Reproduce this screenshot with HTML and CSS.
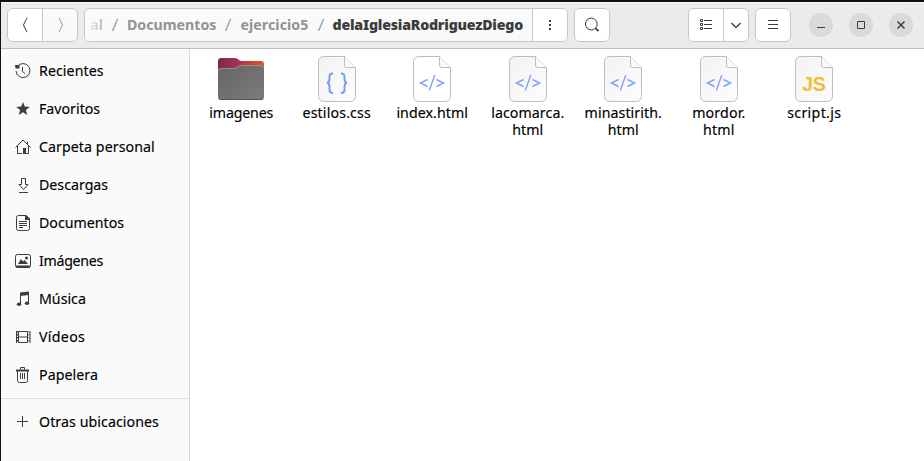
FILE: index.html
```html
<!DOCTYPE html>
<html lang="es">
<head>
<meta charset="utf-8">
<title>delaIglesiaRodriguezDiego</title>
<link rel="stylesheet" href="styles.css">
</head>
<body>
<svg width="0" height="0" class="defs" aria-hidden="true">
  <defs>
    <linearGradient id="paper" x1="0" y1="0" x2="1" y2="1"><stop offset="0" stop-color="#f3f3f3"/><stop offset="1" stop-color="#fcfcfc"/></linearGradient>
    <linearGradient id="back" x1="0" y1="0" x2="1" y2="0"><stop offset="0" stop-color="#7b2854"/><stop offset=".4" stop-color="#a3314f"/><stop offset="1" stop-color="#e95420"/></linearGradient>
    <linearGradient id="front" x1="0" y1="0" x2="1" y2="1"><stop offset="0" stop-color="#666"/><stop offset="1" stop-color="#7b7b7b"/></linearGradient>
    <symbol id="sheet" viewBox="0 0 38 46"><path d="M5.500.5H26.500L37.500 11.500V40.500a5 5 0 0 1-5 5H5.500a5 5 0 0 1-5-5V5.500a5 5 0 0 1 5-5Z" stroke="#bdbdbd"/><path d="M26.500.5V9.500q0 2 2 2h9" fill="#fafafa" stroke="#bdbdbd"/></symbol>
    <symbol id="tags" viewBox="0 0 38 46"><path d="M14.500 23.500 7.500 27l7 3.500M23.500 23.500l7 3.500-7 3.500M21.800 19 16.300 34.500" fill="none" stroke="#7fa3f3" stroke-width="1.400"/></symbol>
  </defs>
</svg>
<div class="window">
  <header class="bar">
    <div class="group nav">
      <button><svg width="16" height="16"><path d="M10 .8 6.500 8l3.500 7.200"/></svg></button>
      <button class="off"><svg width="16" height="16"><path d="m7 .8 3.500 7.200L7 15.200"/></svg></button>
    </div>
    <div class="group path">
      <div class="crumbs"><span class="cut">al</span><i>/</i><span>Documentos</span><i>/</i><span class="wide">ejercicio5</span><i>/</i><b>delaIglesiaRodriguezDiego</b></div>
      <button><svg width="16" height="16"><path class="solid" d="M7 3h2v2H7zM7 7h2v2H7zM7 11h2v2H7z"/></svg></button>
    </div>
    <div class="group search"><button><svg width="16" height="16"><circle cx="7.300" cy="7" r="5.900"/><path d="m11.500 11.200 3 3" stroke-width="1.800"/></svg></button></div>
    <div class="group view">
      <button><svg width="16" height="16"><path d="M2.500 2.500h2v2h-2zM2.500 6.500h2v2h-2zM2.500 10.500h2v2h-2zM6 3.500h8M6 7.500h8M6 11.500h8"/></svg></button>
      <button><svg width="16" height="16"><path d="m3.500 6 4.500 4.500L12.500 6" stroke-width="1.300"/></svg></button>
    </div>
    <div class="group menu"><button><svg width="16" height="16"><path d="M3 3.500h10M3 7.500h10M3 11.500h10"/></svg></button></div>
    <div class="controls">
      <button><svg width="16" height="16"><path d="M4 10.500h8"/></svg></button>
      <button><svg width="16" height="16"><path d="M4.500 4.500h7v7h-7z"/></svg></button>
      <button><svg width="16" height="16"><path d="m4.500 4.500 7 7m0-7-7 7" stroke-width="1.500"/></svg></button>
    </div>
  </header>
  <div class="body">
    <nav class="side">
      <a><svg width="16" height="16"><path d="M2.300 3.500A7 7 0 1 1 1 8M7.500 4v4.500l2.500 2"/><path class="solid" d="M0 2h4.500v3.500H.5z"/></svg><span class="wide">Recientes</span></a>
      <a><svg width="16" height="16"><path class="solid" d="m8 1 1.800 4.600 5 .3-3.900 3.200 1.300 4.900L8 11.300 3.800 14l1.300-4.900-3.900-3.200 5-.3z"/></svg><span>Favoritos</span></a>
      <a><svg width="16" height="16"><path d="M.5 8.500 8 1l7.500 7.500M2.500 7v7.500H7M13.500 7v7.500H10M12.500 2.500v3"/><path class="solid" d="M8 9h3v6H8z"/></svg><span class="wide">Carpeta personal</span></a>
      <a><svg width="16" height="16"><path d="M6.500 1.500h4v6H13l-4.500 5L4 7.500h2.500zM4 15.500h9"/></svg><span>Descargas</span></a>
      <a><svg width="16" height="16"><path d="M3.500.5H11L14.500 4v9.500a2 2 0 0 1-2 2h-9a2 2 0 0 1-2-2v-11a2 2 0 0 1 2-2ZM4 6.500h8M4 8.500h8M4 10.500h8M4 12.500h4"/><path class="solid" d="M10 0h1l4 4v1h-5z"/></svg><span>Documentos</span></a>
      <a><svg width="16" height="16"><rect x=".5" y="1.500" width="15" height="13" rx="2"/><path class="solid" d="M1 12.500h14v2H1zM3 11l3-5 2 2.500 1.500-1.500L13 11z"/><circle class="solid" cx="11.500" cy="5" r="1.500"/></svg><span class="tight">Imágenes</span></a>
      <a><svg width="16" height="16"><path d="M5.500 13V2.500l8-1V12"/><path class="solid" d="M5 1.500 14 .5V4L5 5z"/><ellipse class="solid" cx="4" cy="13.200" rx="2.200" ry="1.800"/><ellipse class="solid" cx="12" cy="12.200" rx="2.200" ry="1.800"/></svg><span>Música</span></a>
      <a><svg width="16" height="16"><path d="M3.500 2.500h9v11h-9zM3 8h10M1.500 2v12M15 2v12"/><path d="M2.500 2v12M14 2v12" stroke-dasharray="1.500 1.500"/></svg><span class="widest">Vídeos</span></a>
      <a><svg width="16" height="16"><path d="M5.500 2.500v-2h4v2M2.500 4v9.500a2 2 0 0 0 2 2h6a2 2 0 0 0 2-2V4M5.500 6v6M7.500 6v6M9.500 6v6"/><path d="M1 3.500h13" stroke-width="2"/></svg><span class="wide">Papelera</span></a>
      <hr>
      <a><svg width="16" height="16"><path d="M2 7.500h11M7.500 2v11"/></svg><span class="wide">Otras ubicaciones</span></a>
    </nav>
    <main class="files">
      <figure><svg width="46" height="46"><path d="M0 8V5a3 3 0 0 1 3-3h14q2 0 3.500 1.500T24 5h19a3 3 0 0 1 3 3v10H0z" fill="url(#back)"/><path d="M0 15a3 3 0 0 1 3-3h13q2 0 3.500-1.500T23 9h20a3 3 0 0 1 3 3v29a3 3 0 0 1-3 3H3a3 3 0 0 1-3-3z" fill="url(#front)"/><path d="M.5 15a2.500 2.500 0 0 1 2.500-2.500h13q2 0 3.500-1.500T23 9.500h20a2.500 2.500 0 0 1 2.500 2.500" fill="none" stroke="#929292"/><path d="M1 42.500q.7 1 2 1h40q1.300 0 2-1" fill="none" stroke="#555"/></svg><figcaption class="snug">imagenes</figcaption></figure>
      <figure><svg width="38" height="46"><use href="#sheet" fill="url(#paper)"/><path d="M15 17.500c-3 0-3.500 1-3.500 3v2.500q0 3.500-2.500 3.700 2.500.3 2.500 3.800V34q0 3 3.500 3M23 17.500c3 0 3.500 1 3.500 3v2.500q0 3.500 2.500 3.700-2.500.3-2.500 3.800V34q0 3-3.500 3" fill="none" stroke="#729cf5" stroke-width="1.900"/></svg><figcaption class="wider">estilos.css</figcaption></figure>
      <figure><svg width="38" height="46"><use href="#sheet" fill="#fff"/><use href="#tags"/></svg><figcaption class="wide">index.html</figcaption></figure>
      <figure><svg width="38" height="46"><use href="#sheet" fill="url(#paper)"/><use href="#tags"/></svg><figcaption class="wide">lacomarca.<br>html</figcaption></figure>
      <figure><svg width="38" height="46"><use href="#sheet" fill="url(#paper)"/><use href="#tags"/></svg><figcaption class="wide">minastirith.<br>html</figcaption></figure>
      <figure><svg width="38" height="46"><use href="#sheet" fill="url(#paper)"/><use href="#tags"/></svg><figcaption class="wider">mordor.<br>html</figcaption></figure>
      <figure><svg width="38" height="46"><use href="#sheet" fill="url(#paper)"/><text x="18.500" y="35" class="js">JS</text></svg><figcaption class="widest">script.js</figcaption></figure>
    </main>
  </div>
</div>
</body>
</html>
```
FILE: styles.css
```css
* { box-sizing: border-box; }
body { margin: 0; background: #fff; font: 14.2px/17px "Noto Sans", "Open Sans", sans-serif; color: #000; }
.defs { display: block; width: 0; height: 0; position: absolute; }
.window { width: 924px; height: 461px; overflow: hidden; display: flex; flex-direction: column; border-top: 2px solid #111; border-left: 1px solid #1c0c14; }
.bar { height: 47px; flex: none; display: flex; padding: 5px 0 0 6px; background: #ebebeb; border-top: 1px solid #f9f9f9; border-bottom: 1px solid #bfbfbf; }
.bar svg, .side svg { fill: none; stroke: #3d3d3d; stroke-width: 1; display: block; flex: none; overflow: visible; }
.bar .solid, .side .solid { fill: #3d3d3d; stroke: none; }
button { border: 0; padding: 0; background: #fff; display: flex; align-items: center; justify-content: center; }
.group { height: 34px; display: flex; border: 1px solid #c6c6c6; border-radius: 6px; overflow: hidden; background: #fff; }
.group button { flex: 1; }
.group button + button, .path button { border-left: 1px solid #c6c6c6; }
.nav { width: 71px; margin-right: 6px; }
.group .off { background: #fafafa; }
.bar .off svg { stroke: #999; }
.path { width: 484px; margin-right: 6px; }
.path button { flex: 0 0 35px; }
.crumbs { flex: 1; display: flex; align-items: center; justify-content: flex-end; padding: 0 9px 2px 0; background: #fafafa; font-weight: 700; color: #929292; white-space: nowrap; }
.crumbs i { font-weight: 400; font-style: normal; width: 24px; text-align: center; transform: skewX(-6deg) scaleY(1.2); }
.crumbs b { color: #3d3d3d; letter-spacing: -.23px; }
.cut { background: linear-gradient(90deg, #eee, #b5b5b5); background-clip: text; color: transparent; }
.search { width: 36px; margin-right: 78px; }
.view { width: 61px; margin-right: 6px; }
.view button + button { flex: 0 0 25px; }
.menu { width: 36px; margin-right: 18px; }
.controls { display: flex; gap: 16px; padding-top: 5px; }
.controls button { width: 24px; height: 24px; border-radius: 50%; background: #dadada; }
.body { flex: 1; display: flex; min-height: 0; }
.side { width: 189px; flex: none; padding-top: 3px; background: #fafafa; border-right: 1px solid #d9d9d9; }
.side a { height: 38px; display: flex; align-items: center; gap: 8px; padding-left: 14px; white-space: nowrap; }
.side span { padding-bottom: 2px; }
.side hr { margin: 4px 0; border: 0; height: 1px; background: #dcdcdc; }
.side span, figcaption { -webkit-text-stroke: .15px #000; }
.files { flex: 1; display: flex; padding: 7px 0 0 3.5px; }
figure { margin: 0; width: 95.5px; flex: none; display: flex; flex-direction: column; align-items: center; text-align: center; }
figure svg { display: block; }
figcaption { margin-top: 2px; white-space: nowrap; }
.tight { letter-spacing: -.3px; }
.snug { letter-spacing: -.15px; }
.wide { letter-spacing: .07px; }
.wider { letter-spacing: .15px; }
.widest { letter-spacing: .32px; }
.js { font: 700 20px "Liberation Sans", sans-serif; letter-spacing: -.8px; fill: #edc035; text-anchor: middle; }
```
